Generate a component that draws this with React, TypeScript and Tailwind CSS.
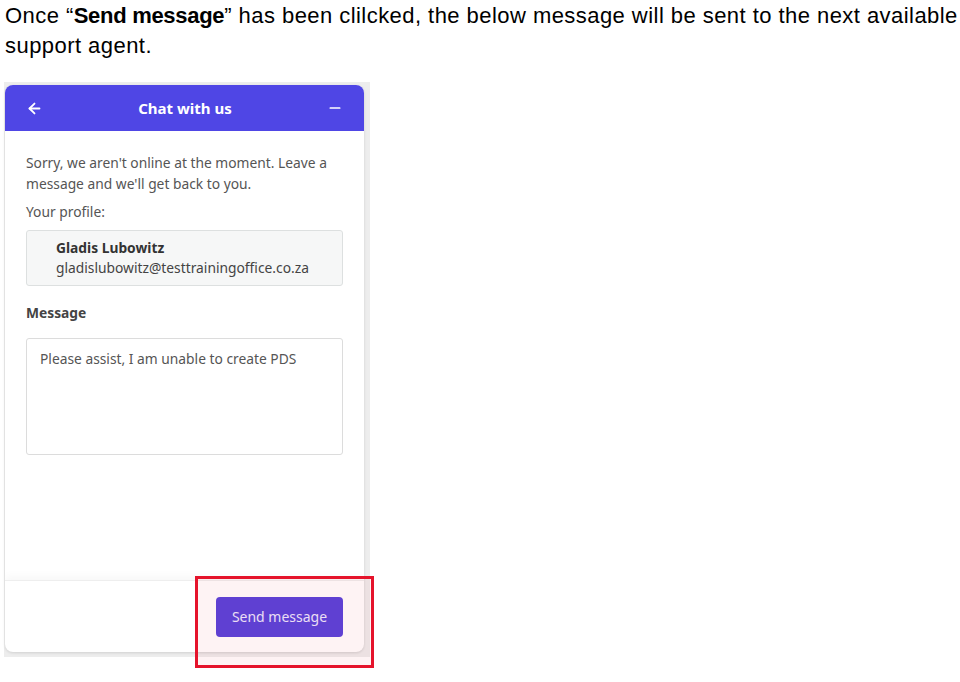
import { ArrowLeft, Minus } from "lucide-react";

export default function App() {
  return (
    <div className="relative h-[682px] w-[960px] bg-white">
      <p className="w-[960px] pl-[5px] pt-[1px] text-[22px] leading-[30px] text-black [font-family:'Liberation_Sans',sans-serif] tracking-[0.45px]">
        Once “<b className="tracking-[-0.3px]">Send message</b>” has been clilcked, the below message will be sent to the next available
        <br />
        support agent.
      </p>

      {/* screenshot of the chat widget */}
      <div className="ml-[4px] mt-[21px] h-[575px] w-[366px] bg-[#ededed] pl-[1px] pt-[3px]">
        <div className="flex h-[567px] w-[359px] flex-col overflow-hidden rounded-[8px] bg-white shadow-[0_1px_3px_rgba(0,0,0,0.12)] [font-family:'Noto_Sans',sans-serif]">
          <div className="flex h-[46px] items-center justify-between bg-[#4f46e5] px-[21px] text-white">
            <ArrowLeft className="h-[17px] w-[17px]" strokeWidth={2.6} />
            <span className="text-[15px] font-bold">Chat with us</span>
            <Minus className="h-[16px] w-[16px]" strokeWidth={2.6} />
          </div>

          <div className="flex-1 px-[21px] pt-[21px] text-[13.8px] text-[#555]">
            <p className="leading-[21px]">
              Sorry, we aren't online at the moment. Leave a message and we'll get back to you.
            </p>
            <p className="mt-[8px] leading-[20px]">Your profile:</p>
            <div className="mt-[8px] h-[56px] rounded-[3px] border border-[#dde0e0] bg-[#f6f7f7] pl-[29px] pt-[7px] leading-[20px]">
              <div className="font-bold text-[#333]">Gladis Lubowitz</div>
              <div className="text-[#444]">gladislubowitz@testtrainingoffice.co.za</div>
            </div>
            <p className="mt-[17px] font-bold leading-[20px] text-[#444]">Message</p>
            <div className="mt-[15px] h-[117px] rounded-[3px] border border-[#dcdcdc] px-[13px] pt-[10px] leading-[20px] text-[#555]">
              Please assist, I am unable to create PDS
            </div>
          </div>

          <div className="flex h-[72px] items-center justify-end border-t border-[#eeeeee] px-[21px] shadow-[0_-4px_8px_rgba(0,0,0,0.03)]">
            <button className="h-[40px] w-[127px] rounded-[4px] bg-[#5843dc] text-[14px] text-[#ebe8ff]">
              Send message
            </button>
          </div>
        </div>
      </div>

      {/* red highlight */}
      <div className="absolute left-[195px] top-[576px] h-[92px] w-[179px] border-[3px] border-[#e5132b] bg-[rgba(229,19,43,0.05)]" />
    </div>
  );
}
